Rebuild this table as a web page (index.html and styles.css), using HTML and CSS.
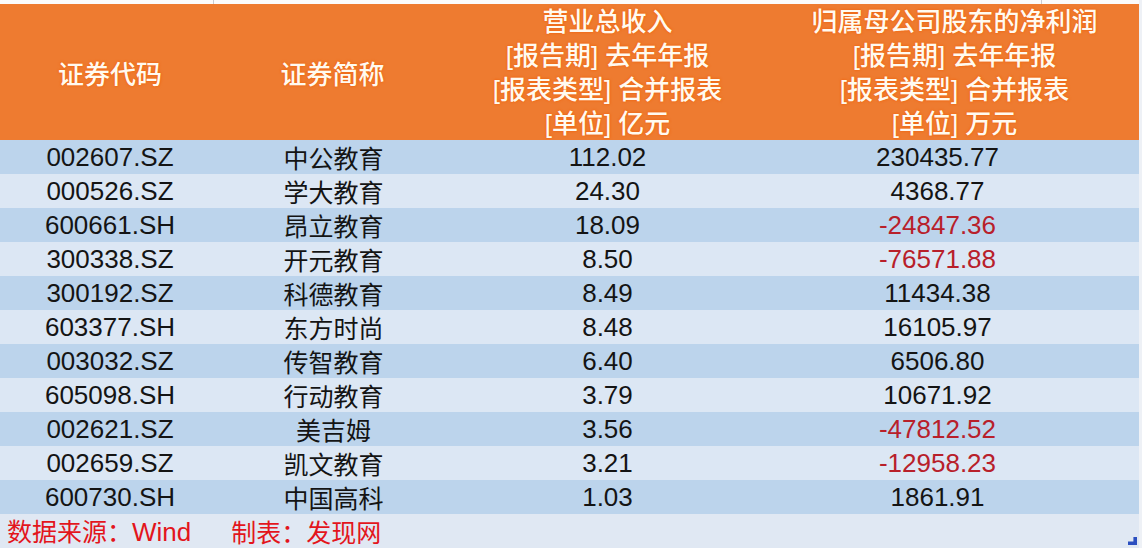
FILE: index.html
```html
<!DOCTYPE html>
<html lang="zh-CN">
<head>
<meta charset="utf-8">
<title>教育上市公司营收与净利润</title>
<link rel="stylesheet" href="styles.css">
</head>
<body>
<div class="sheet">
  <div class="topstrip">
    <span class="tick tick-a"></span>
    <span class="tick tick-b"></span>
  </div>
  <div class="table">
    <div class="hcell c1">证券代码</div>
    <div class="hcell c2">证券简称</div>
    <div class="hcell c3 multi">
      <span>营业总收入</span>
      <span>[报告期] 去年年报</span>
      <span>[报表类型] 合并报表</span>
      <span>[单位] 亿元</span>
    </div>
    <div class="hcell c4 multi">
      <span>归属母公司股东的净利润</span>
      <span>[报告期] 去年年报</span>
      <span>[报表类型] 合并报表</span>
      <span>[单位] 万元</span>
    </div>

    <div class="row dark"><div class="cell num">002607.SZ</div><div class="cell cn">中公教育</div><div class="cell num">112.02</div><div class="cell num v4">230435.77</div></div>
    <div class="row light"><div class="cell num">000526.SZ</div><div class="cell cn">学大教育</div><div class="cell num">24.30</div><div class="cell num v4">4368.77</div></div>
    <div class="row dark"><div class="cell num">600661.SH</div><div class="cell cn">昂立教育</div><div class="cell num">18.09</div><div class="cell num v4 neg">-24847.36</div></div>
    <div class="row light"><div class="cell num">300338.SZ</div><div class="cell cn">开元教育</div><div class="cell num">8.50</div><div class="cell num v4 neg">-76571.88</div></div>
    <div class="row dark"><div class="cell num">300192.SZ</div><div class="cell cn">科德教育</div><div class="cell num">8.49</div><div class="cell num v4">11434.38</div></div>
    <div class="row light"><div class="cell num">603377.SH</div><div class="cell cn">东方时尚</div><div class="cell num">8.48</div><div class="cell num v4">16105.97</div></div>
    <div class="row dark"><div class="cell num">003032.SZ</div><div class="cell cn">传智教育</div><div class="cell num">6.40</div><div class="cell num v4">6506.80</div></div>
    <div class="row light"><div class="cell num">605098.SH</div><div class="cell cn">行动教育</div><div class="cell num">3.79</div><div class="cell num v4">10671.92</div></div>
    <div class="row dark"><div class="cell num">002621.SZ</div><div class="cell cn">美吉姆</div><div class="cell num">3.56</div><div class="cell num v4 neg">-47812.52</div></div>
    <div class="row light"><div class="cell num">002659.SZ</div><div class="cell cn">凯文教育</div><div class="cell num">3.21</div><div class="cell num v4 neg">-12958.23</div></div>
    <div class="row dark"><div class="cell num">600730.SH</div><div class="cell cn">中国高科</div><div class="cell num">1.03</div><div class="cell num v4">1861.91</div></div>

    <div class="footer">
      <span>数据来源：<span class="latin">Wind</span></span>
      <span>制表：发现网</span>
      <span class="handle"></span>
    </div>
  </div>
</div>
</body>
</html>
```

FILE: styles.css
```css
html, body {
  margin: 0;
  padding: 0;
  background: #eef1f6;
}

.sheet {
  width: 1142px;
  height: 548px;
  overflow: hidden;
  font-family: "Liberation Sans", "Noto Sans CJK SC", sans-serif;
}

.topstrip {
  position: relative;
  height: 4px;
  width: 1139px;
  background: #fbfbfb;
}

.tick {
  position: absolute;
  top: 0;
  width: 1px;
  height: 4px;
  background: #c9ccd2;
}
.tick-a { left: 213px; }
.tick-b { left: 1041px; }

.table {
  position: relative;
  width: 1139px;
  display: grid;
  grid-template-columns: 220px 225px 325px 369px;
  grid-auto-rows: 34px;
}

.hcell {
  grid-row: span 4;
  background: #ee7b30;
  color: #fffaf0;
  font-family: "Liberation Sans", "Noto Sans CJK SC", sans-serif;
  font-weight: 500;
  font-size: 26px;
  display: flex;
  align-items: center;
  justify-content: center;
  text-shadow: 0 0 2px #f06410, 0 0 3px #f06a14;
}

.hcell.multi {
  flex-direction: column;
  justify-content: flex-start;
  line-height: 34px;
  padding-top: 1px;
}
.hcell.multi span {
  display: block;
  white-space: nowrap;
  height: 34px;
}

.row {
  display: contents;
}

.cell {
  display: flex;
  align-items: center;
  justify-content: center;
  font-size: 26px;
  color: #141414;
  white-space: nowrap;
}

.row.dark .cell { background: #bcd4ec; }
.row.light .cell { background: #dce7f4; }

.cell.num {
  font-family: "Liberation Sans", sans-serif;
}

.cell.cn {
  font-family: "Noto Sans CJK SC", sans-serif;
  font-size: 25px;
  padding-left: 2px;
}

.cell.v4 {
  padding-right: 34px;
}

.cell.neg {
  color: #b8202a;
}

.footer {
  grid-column: 1 / -1;
  position: relative;
  background: #e0e8f3;
  display: flex;
  align-items: center;
  gap: 40px;
  padding-left: 7px;
  color: #e3151c;
  font-family: "Noto Sans CJK SC", sans-serif;
  font-size: 25px;
  line-height: 34px;
}

.footer .latin {
  font-family: "Liberation Sans", sans-serif;
  font-size: 26px;
}

.handle {
  position: absolute;
  right: 2px;
  bottom: 3px;
  width: 9px;
  height: 8px;
  background: #2b4fc0;
  clip-path: polygon(60% 0, 100% 0, 100% 100%, 0 100%, 0 55%, 60% 55%);
}
```
